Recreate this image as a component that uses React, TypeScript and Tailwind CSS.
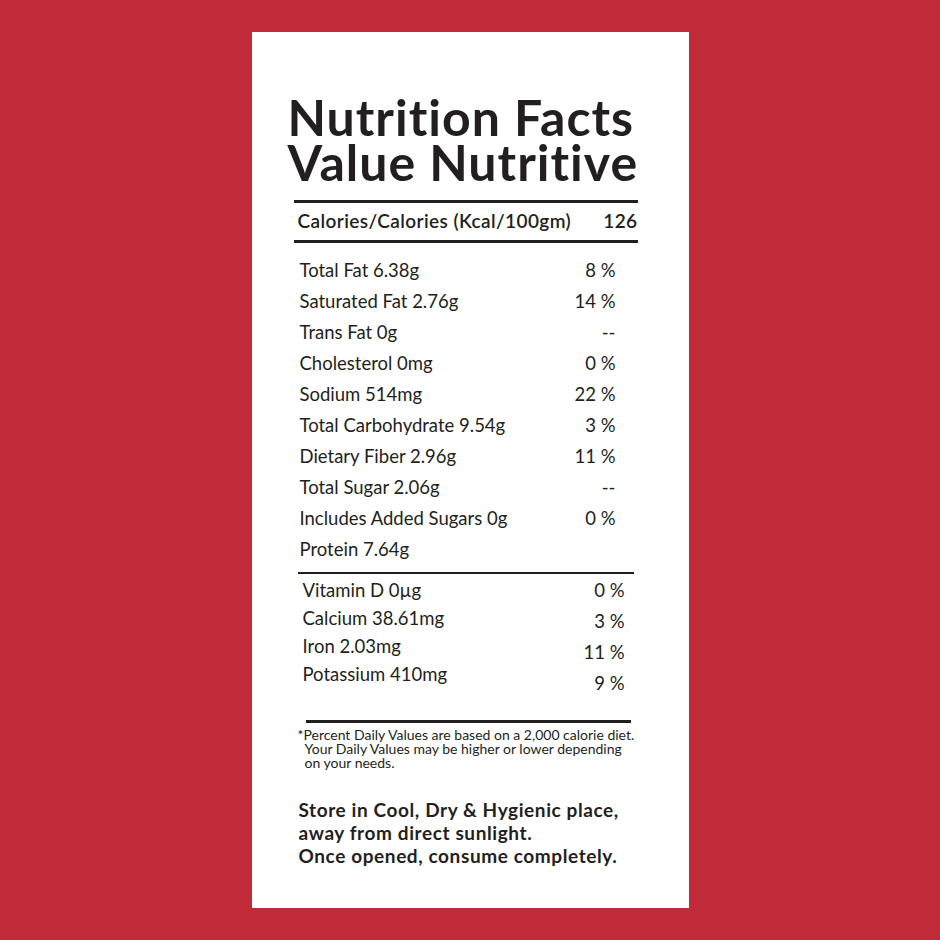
const nutrients = [
  { label: 'Total Fat 6.38g', dv: '8 %' },
  { label: 'Saturated Fat 2.76g', dv: '14 %' },
  { label: 'Trans Fat 0g', dv: '--' },
  { label: 'Cholesterol 0mg', dv: '0 %' },
  { label: 'Sodium 514mg', dv: '22 %' },
  { label: 'Total Carbohydrate 9.54g', dv: '3 %' },
  { label: 'Dietary Fiber 2.96g', dv: '11 %' },
  { label: 'Total Sugar 2.06g', dv: '--' },
  { label: 'Includes Added Sugars 0g', dv: '0 %' },
  { label: 'Protein 7.64g', dv: '' },
];

const minerals = [
  { label: 'Vitamin D 0µg', dv: '0 %' },
  { label: 'Calcium 38.61mg', dv: '3 %' },
  { label: 'Iron 2.03mg', dv: '11 %' },
  { label: 'Potassium 410mg', dv: '9 %' },
];

export default function App() {
  return (
    <div className="flex h-[940px] w-[940px] items-center justify-center bg-[#c12a39] font-['Lato',sans-serif] text-[#231f20]">
      <div className="flex h-[876px] w-[437px] flex-col bg-white pt-[63px]">
        <h1 className="ml-[36px] whitespace-nowrap text-[50px] font-bold leading-[45px] tracking-[1px]">
          Nutrition Facts
          <br />
          Value Nutritive
        </h1>

        <div className="ml-[42px] mt-[15px] h-[3px] w-[344px] bg-[#231f20]" />
        <div className="ml-[46px] flex h-[37px] w-[340px] items-center justify-between text-[19px] font-semibold tracking-[0.4px]">
          <span>Calories/Calories (Kcal/100gm)</span>
          <span>126</span>
        </div>
        <div className="ml-[42px] h-[3px] w-[344px] bg-[#231f20]" />

        <div className="ml-[48px] mt-[12px] flex w-[316px] flex-col text-[18.5px]">
          {nutrients.map((n) => (
            <div key={n.label} className="flex h-[31px] items-center justify-between">
              <span>{n.label}</span>
              <span>{n.dv}</span>
            </div>
          ))}
        </div>

        <div className="ml-[46px] mt-[7px] h-[2px] w-[336px] bg-[#231f20]" />

        <div className="ml-[51px] flex w-[322px] justify-between text-[18.5px]">
          <div className="flex flex-col pt-[3px]">
            {minerals.map((m) => (
              <div key={m.label} className="flex h-[28px] items-center">
                {m.label}
              </div>
            ))}
          </div>
          <div className="flex flex-col items-end pt-[1px]">
            {minerals.map((m) => (
              <div key={m.label} className="flex h-[31px] items-center">
                {m.dv}
              </div>
            ))}
          </div>
        </div>

        <div className="ml-[54px] mt-[21px] h-[3px] w-[325px] bg-[#231f20]" />
        <div className="ml-[46px] mt-[5px] whitespace-nowrap text-[14px] leading-[14px]">
          <div>*Percent Daily Values are based on a 2,000 calorie diet.</div>
          <div className="pl-[7px]">Your Daily Values may be higher or lower depending</div>
          <div className="pl-[7px]">on your needs.</div>
        </div>

        <div className="ml-[47px] mt-[28px] whitespace-nowrap text-[19px] font-bold leading-[23px] tracking-[0.6px]">
          <div>Store in Cool, Dry &amp; Hygienic place,</div>
          <div>away from direct sunlight.</div>
          <div>Once opened, consume completely.</div>
        </div>
      </div>
    </div>
  );
}
